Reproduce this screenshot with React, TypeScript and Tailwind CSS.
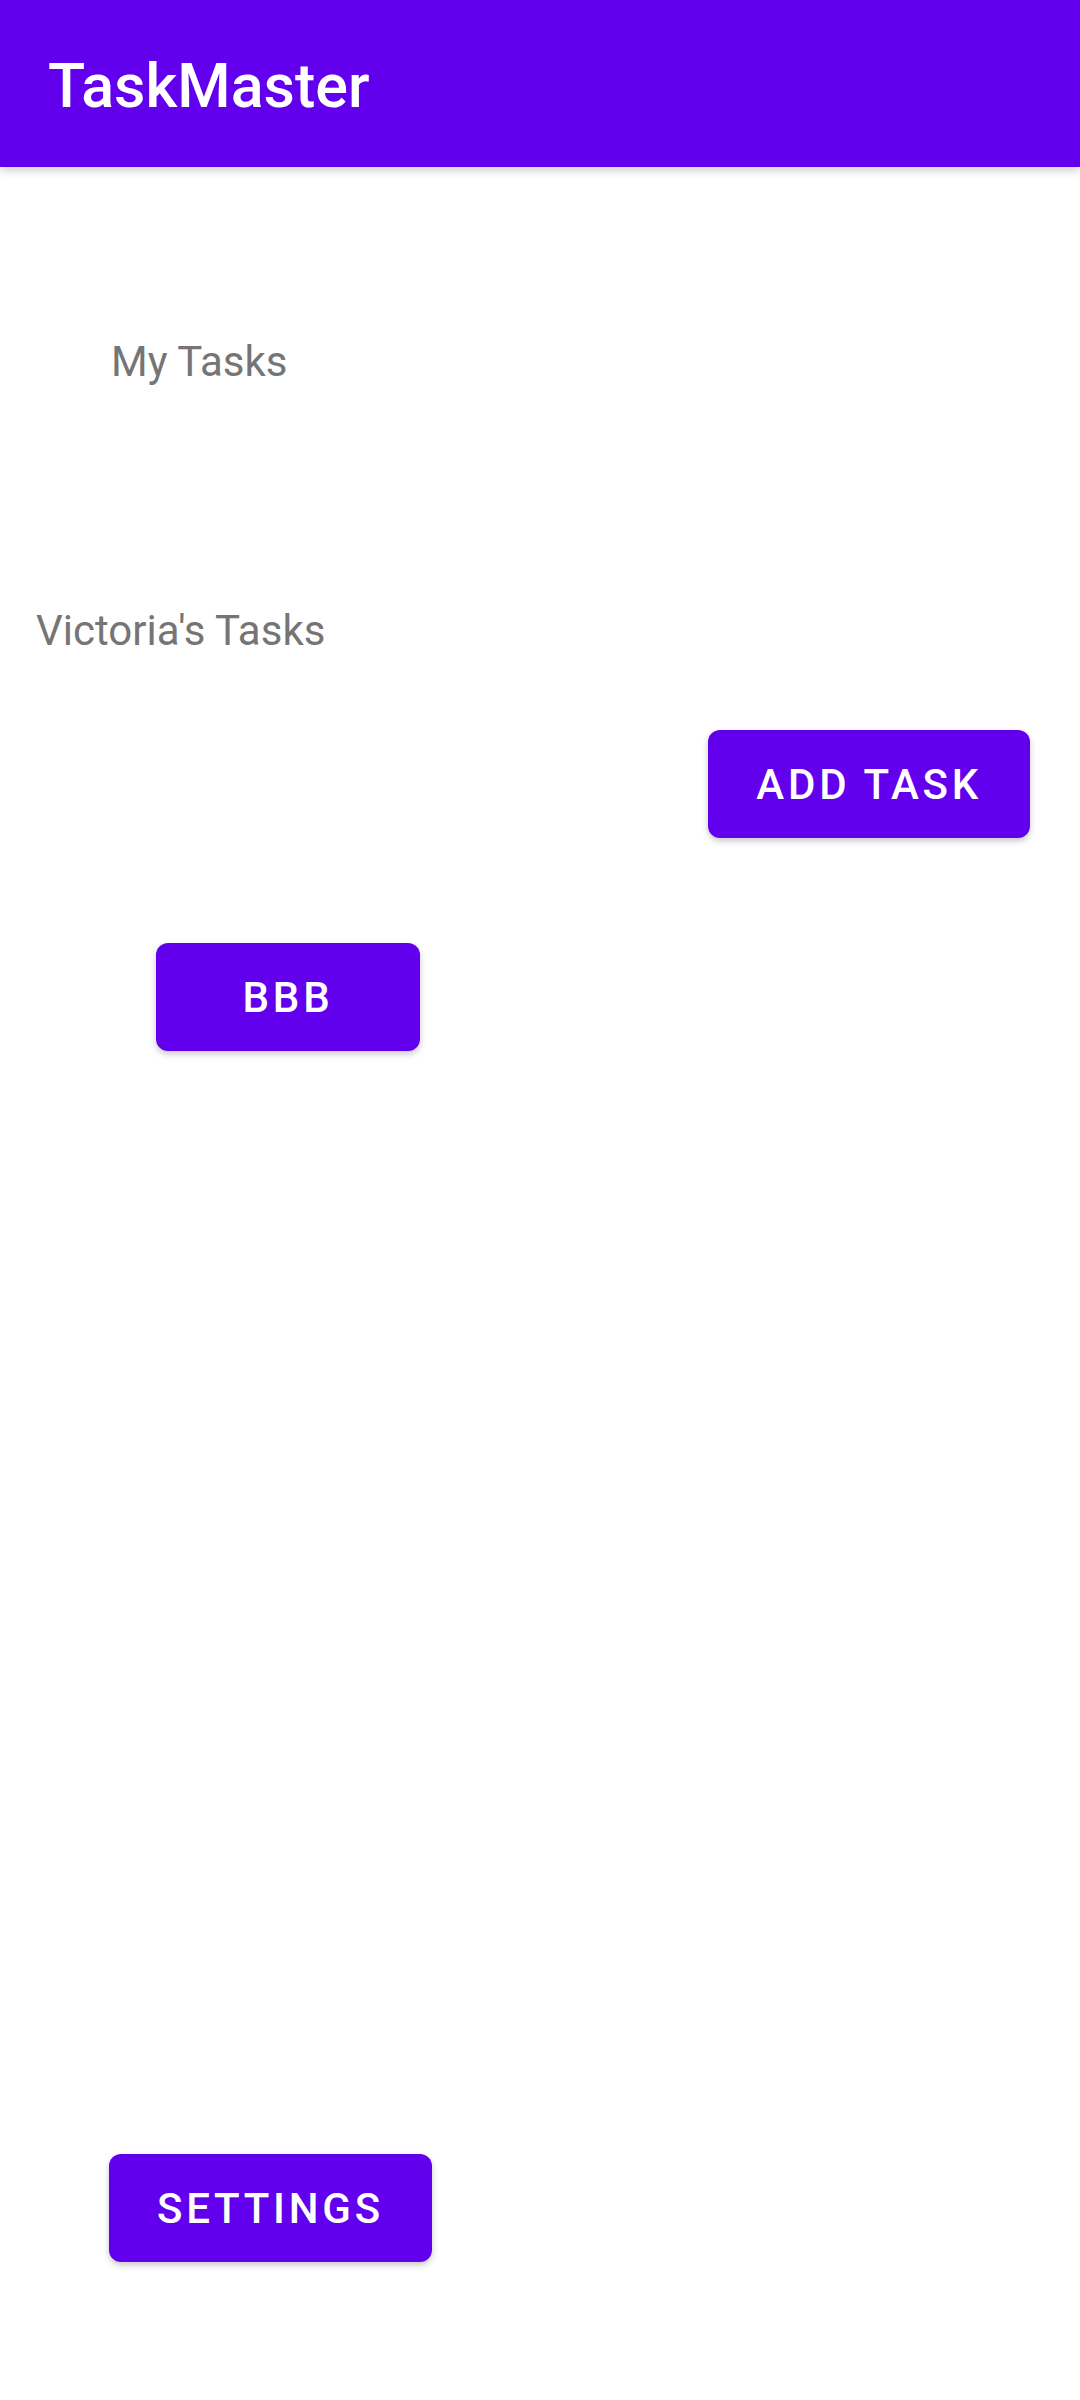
const Btn = ({ label, className }: { label: string; className?: string }) => (
  <button
    className={`flex h-[108px] min-w-[264px] items-center justify-center rounded-[12px] bg-[#6200EE] px-[48px] text-[42px] font-medium uppercase tracking-[3.75px] text-white shadow-[0_3px_6px_rgba(0,0,0,0.22)] ${className ?? ''}`}
  >
    {label}
  </button>
);

const App = () => {
  return (
    <div className="min-h-[2400px] bg-white font-['Roboto',sans-serif]">
      <header className="relative z-10 h-[167px] bg-[#6200EE] px-[48px] pt-[56px] shadow-[0_4px_8px_rgba(0,0,0,0.18)]">
        <h1 className="text-[61px] font-medium leading-[60px] text-white">TaskMaster</h1>
      </header>

      <main className="flex flex-col items-start">
        <p className="ml-[111px] mt-[174px] text-[42px] leading-[42px] text-[#757575]">My Tasks</p>
        <p className="ml-[36px] mt-[227px] text-[42px] leading-[42px] text-[#757575]">Victoria's Tasks</p>

        <Btn label="Add Task" className="mr-[50px] mt-[78px] self-end" />
        <Btn label="bbb" className="ml-[156px] mt-[105px]" />
        <Btn label="Settings" className="ml-[109px] mt-[1103px]" />
      </main>
    </div>
  );
};

export default App;
